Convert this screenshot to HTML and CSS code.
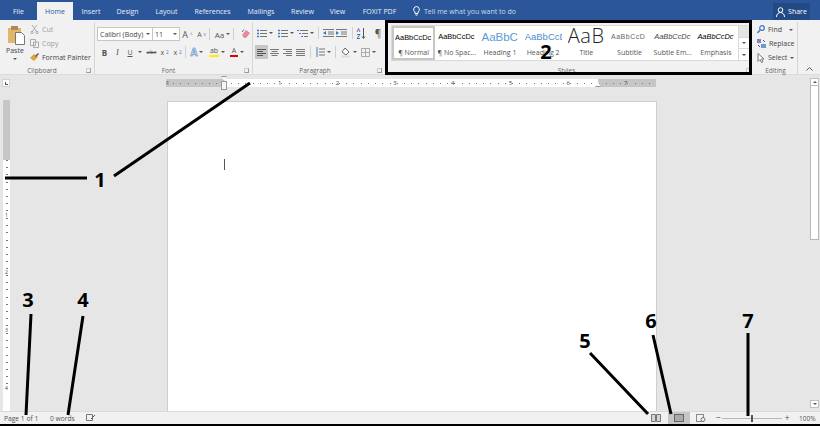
FILE: index.html
```html
<!DOCTYPE html>
<html lang="en">
<head>
<meta charset="utf-8">
<title>Word</title>
<link rel="stylesheet" href="styles.css">
</head>
<body>
<div class="app">
  <header class="tabs">
    <span class="tab w-file">File</span>
    <span class="tab tab-on w-home">Home</span>
    <span class="tab w-insert">Insert</span>
    <span class="tab w-design">Design</span>
    <span class="tab w-layout">Layout</span>
    <span class="tab w-ref">References</span>
    <span class="tab w-mail">Mailings</span>
    <span class="tab w-review">Review</span>
    <span class="tab w-view">View</span>
    <span class="tab w-foxit">FOXIT PDF</span>
    <span class="tell">
      <svg width="7" height="10" viewBox="0 0 7 10"><path d="M3.500.5a3 3 0 0 0-1.500 5.500v1.500h3V6a3 3 0 0 0-1.500-5.500zM2.500 9h2" fill="none" stroke="#fff"/></svg>
      Tell me what you want to do
    </span>
    <span class="share">
      <svg width="9" height="10" viewBox="0 0 9 10"><circle cx="4.500" cy="3" r="2.300" fill="none" stroke="#fff"/><path d="M.5 10c0-3 2-4.500 4-4.500s4 1.500 4 4.500" fill="none" stroke="#fff"/></svg>
      Share
    </span>
  </header>

  <section class="ribbon">
    <div class="group g-clip">
      <div class="body clip-body">
        <div class="paste">
          <svg width="18" height="20" viewBox="0 0 18 20"><rect x="1" y="3" width="13" height="15" fill="#e2b568"/><rect x="4" y="1" width="7" height="4" fill="#a98a5c"/><path d="M8.500 7.500h6l3 3v9h-9z" fill="#fff" stroke="#777"/></svg>
          <span>Paste</span>
          <i class="caret"></i>
        </div>
        <div class="clip-list">
          <span class="clip-item off"><svg width="9" height="9" viewBox="0 0 9 9"><path d="M2 0l5 7M7 0L2 7" stroke="#aaa" fill="none"/><circle cx="2" cy="7.500" r="1.200" fill="none" stroke="#aaa"/><circle cx="7" cy="7.500" r="1.200" fill="none" stroke="#aaa"/></svg>Cut</span>
          <span class="clip-item off"><svg width="9" height="9" viewBox="0 0 9 9"><path d="M.5.5h5v6h-5zM3.500 3h5v5.500h-5z" fill="#f1f1f1" stroke="#aaa"/></svg>Copy</span>
          <span class="clip-item"><svg width="9" height="9" viewBox="0 0 9 9"><path d="M0 5l4-4 4 3-4 4z" fill="#d9a441"/><path d="M5 3l3-3 1 1-3 3z" fill="#555"/></svg>Format Painter</span>
        </div>
      </div>
      <div class="glabel">Clipboard<i class="launch"></i></div>
    </div>

    <div class="group g-font">
      <div class="body rows">
        <div class="row r-font1">
          <span class="combo c-name">Calibri (Body)<i class="caret"></i></span>
          <span class="combo c-size">11<i class="caret"></i></span>
          <span class="ib w-a">A<sup class="up">^</sup></span>
          <span class="ib w-a small-a">A<sup class="up">v</sup></span>
          <i class="sep"></i>
          <span class="ib w-aa">Aa<i class="caret"></i></span>
          <i class="sep"></i>
          <span class="ib w-er"><svg width="10" height="10" viewBox="0 0 10 10"><path d="M1 6l4-5 4 3-4 5H3z" fill="#e58a9a"/><path d="M3 .5L1 3" stroke="#3b78c4"/></svg></span>
        </div>
        <div class="row r-font2">
          <span class="ib w-fmt b">B</span>
          <span class="ib w-fmt it">I</span>
          <span class="ib w-u u"><span class="u-text">U</span><i class="caret"></i></span>
          <span class="ib w-fmt tiny"><s>abc</s></span>
          <span class="ib w-fmt">x<sub>2</sub></span>
          <span class="ib w-fmt">x<sup>2</sup></span>
          <i class="sep"></i>
          <span class="ib w-col blue-a"><span class="outline">A</span><i class="caret"></i></span>
          <span class="ib w-col"><span class="swatch sw-y">ab</span><i class="caret"></i></span>
          <span class="ib w-col"><span class="swatch sw-r">A</span><i class="caret"></i></span>
        </div>
      </div>
      <div class="glabel">Font<i class="launch"></i></div>
    </div>

    <div class="group g-para">
      <div class="body rows">
        <div class="row r-para1">
          <span class="ib w-list"><svg width="10" height="9" viewBox="0 0 10 9"><path d="M3 1.500h7M3 4.500h7M3 7.500h7" stroke="#777"/><path d="M0 1.500h2M0 4.500h2M0 7.500h2" stroke="#3b78c4" stroke-width="1.500"/></svg><i class="caret"></i></span>
          <span class="ib w-list"><svg width="10" height="9" viewBox="0 0 10 9"><path d="M3 1.500h7M3 4.500h7M3 7.500h7" stroke="#777"/><path d="M0 1.500h2M0 4.500h2M0 7.500h2" stroke="#3b78c4" stroke-width="1.500"/></svg><i class="caret"></i></span>
          <span class="ib w-multi"><svg width="11" height="9" viewBox="0 0 11 9"><path d="M3 1.500h8M5 4.500h6M7 7.500h4" stroke="#777"/><path d="M0 1.500h2M2 4.500h2M4 7.500h2" stroke="#3b78c4"/></svg><i class="caret"></i></span>
          <i class="sep sep-p"></i>
          <span class="ib w-ind"><svg width="11" height="8" viewBox="0 0 11 8"><path d="M0 .5h11M5 3h6M5 5h6M0 7.500h11" stroke="#777"/><path d="M0 4l3-2v4z" fill="#3b78c4"/></svg></span>
          <span class="ib w-ind"><svg width="11" height="8" viewBox="0 0 11 8"><path d="M0 .5h11M5 3h6M5 5h6M0 7.500h11" stroke="#777"/><path d="M3 4L0 2v4z" fill="#3b78c4"/></svg></span>
          <i class="sep sep-q"></i>
          <span class="ib w-sort"><svg width="10" height="11" viewBox="0 0 10 11"><path d="M1 4l1.500-3.500L4 4" fill="none" stroke="#8a5bb5"/><path d="M1 6.500h3l-3 4h3" fill="none" stroke="#3b78c4"/><path d="M7.500 0v10M6 8.500l1.500 2 1.500-2" fill="none" stroke="#555"/></svg></span>
          <span class="ib w-pil">¶</span>
        </div>
        <div class="row r-para2">
          <span class="ib w-al al-on"><svg width="9" height="7" viewBox="0 0 9 7"><path d="M0 .5h9M0 2.500h6M0 4.500h9M0 6.500h6" stroke="#555"/></svg></span>
          <span class="ib w-al"><svg width="9" height="7" viewBox="0 0 9 7"><path d="M0 .5h9M1.500 2.500h6M0 4.500h9M1.500 6.500h6" stroke="#777"/></svg></span>
          <span class="ib w-al"><svg width="9" height="7" viewBox="0 0 9 7"><path d="M0 .5h9M3 2.500h6M0 4.500h9M3 6.500h6" stroke="#777"/></svg></span>
          <span class="ib w-al"><svg width="9" height="7" viewBox="0 0 9 7"><path d="M0 .5h9M0 2.500h9M0 4.500h9M0 6.500h9" stroke="#777"/></svg></span>
          <i class="sep sep-a"></i>
          <span class="ib w-sp"><svg width="9" height="10" viewBox="0 0 9 10"><path d="M3 2h6M3 5h6M3 8h6" stroke="#777"/><path d="M1 0v10" stroke="#3b78c4"/></svg><i class="caret"></i></span>
          <i class="sep sep-p"></i>
          <span class="ib w-shade"><svg width="11" height="11" viewBox="0 0 11 11"><path d="M5 1l4 4-3 3-4-3z" fill="#fff" stroke="#666"/><path d="M1 9.500h9" stroke="#ddd" stroke-width="2"/></svg><i class="caret"></i></span>
          <span class="ib w-border"><svg width="9" height="9" viewBox="0 0 9 9"><path d="M.5.5h8v8h-8zM4.500.5v8M.5 4.500h8" fill="none" stroke="#aaa"/></svg><i class="caret"></i></span>
        </div>
      </div>
      <div class="glabel">Paragraph<i class="launch"></i></div>
    </div>

    <div class="group g-styles">
      <div class="gallery">
        <div class="cells">
          <div class="cell cell-on"><span class="pv pv-n">AaBbCcDc</span><span class="nm">¶ Normal</span></div>
          <div class="cell"><span class="pv pv-n">AaBbCcDc</span><span class="nm">¶ No Spac...</span></div>
          <div class="cell"><span class="pv pv-h1">AaBbCc</span><span class="nm">Heading 1</span></div>
          <div class="cell"><span class="pv pv-h2">AaBbCcD</span><span class="nm">Heading 2</span></div>
          <div class="cell"><span class="pv pv-t">AaB</span><span class="nm">Title</span></div>
          <div class="cell"><span class="pv pv-s">AaBbCcD</span><span class="nm">Subtitle</span></div>
          <div class="cell"><span class="pv pv-e">AaBbCcDc</span><span class="nm">Subtle Em...</span></div>
          <div class="cell"><span class="pv pv-em">AaBbCcDc</span><span class="nm">Emphasis</span></div>
        </div>
        <div class="gscroll">
          <span class="gbtn gb-off"></span>
          <span class="gbtn"><i class="caret"></i></span>
          <span class="gbtn gb-more"><i class="caret"></i></span>
        </div>
      </div>
      <div class="glabel">Styles<i class="launch"></i></div>
    </div>

    <div class="group g-edit">
      <div class="body edit-list">
        <span class="clip-item"><svg width="8" height="9" viewBox="0 0 8 9"><circle cx="5" cy="3" r="2.300" fill="none" stroke="#3b78c4" stroke-width="1.200"/><path d="M3 5L.5 8" stroke="#3b78c4" stroke-width="1.400"/></svg>Find<i class="caret caret-f"></i></span>
        <span class="clip-item"><svg width="9" height="9" viewBox="0 0 9 9"><rect x="0" y="0" width="4" height="4" fill="#8a7cc2"/><rect x="4" y="5" width="5" height="4" fill="#6d9bd1"/><path d="M6 1l2 2M1 6l2 2" stroke="#555"/></svg>Replace</span>
        <span class="clip-item"><svg width="8" height="10" viewBox="0 0 8 10"><path d="M1 .5v8l2-2 1.500 3 1.500-.7L4.500 6H7z" fill="#fff" stroke="#777"/></svg>Select<i class="caret caret-s"></i></span>
      </div>
      <div class="glabel">Editing</div>
    </div>
    <div class="collapse"><svg width="7" height="4" viewBox="0 0 7 4"><path d="M.5 3.500l3-3 3 3" fill="none" stroke="#555"/></svg></div>
  </section>

  <div class="ruler-row">
    <span class="corner"><i></i></span>
    <div class="hruler">
      <span class="hr-cell">1</span>
      <span class="hr-cell">1</span><span class="hr-cell">2</span><span class="hr-cell">3</span><span class="hr-cell">4</span><span class="hr-cell">5</span><span class="hr-cell">6</span><span class="hr-cell">7</span>
      <i class="indent-top"></i>
      <i class="indent-bot"></i>
      <i class="indent-right"></i>
    </div>
  </div>

  <main class="work">
    <div class="vruler">
      <span class="vr-cell">1</span><span class="vr-cell">2</span><span class="vr-cell">3</span><span class="vr-cell">4</span>
    </div>
    <div class="page"><i class="cursor"></i></div>
    <div class="vscroll">
      <span class="vs-btn"><b class="tri-up"></b></span>
      <span class="vs-thumb"></span>
      <span class="vs-btn vs-down"><b class="tri-down"></b></span>
    </div>
  </main>

  <footer class="status">
    <span class="st-page">Page 1 of 1</span>
    <span class="st-words">0 words</span>
    <svg class="st-proof" width="10" height="8" viewBox="0 0 10 8"><path d="M.5.5h6v6h-6z" fill="none" stroke="#777"/><path d="M5 5l4-4" stroke="#555"/></svg>
    <span class="st-space"></span>
    <span class="vw"><svg width="10" height="8" viewBox="0 0 10 8"><path d="M.5.5h4v7h-4zM5.500.5h4v7h-4z" fill="#d5d5d5" stroke="#777"/></svg></span>
    <span class="vw vw-on"><svg width="10" height="8" viewBox="0 0 10 8"><rect x=".5" y=".5" width="9" height="7" fill="#aaa" stroke="#666"/></svg></span>
    <span class="vw"><svg width="10" height="8" viewBox="0 0 10 8"><rect x=".5" y=".5" width="7" height="7" fill="none" stroke="#888"/><circle cx="7" cy="5.500" r="2" fill="#f1f1f1" stroke="#777"/></svg></span>
    <span class="zm zm-minus">−</span>
    <span class="slider"><i class="knob"></i></span>
    <span class="zm">+</span>
    <span class="pct">100%</span>
  </footer>
  <div class="bottom-line"></div>

  <svg class="marks" width="820" height="426" viewBox="0 0 820 426">
    <g stroke="#000" stroke-width="3" fill="none">
      <path d="M5 178H87M114 176L250 83"/>
      <rect x="386.500" y="21.500" width="364" height="52"/>
      <path d="M31 314L26 415M83 316L68 415M590 353L648 414M653 335L671 414M748 333V416"/>
    </g>
  </svg>
  <b class="num n1">1</b>
  <b class="num n2">2</b>
  <b class="num n3">3</b>
  <b class="num n4">4</b>
  <b class="num n5">5</b>
  <b class="num n6">6</b>
  <b class="num n7">7</b>
</div>
</body>
</html>
```
FILE: styles.css
```css
* { box-sizing: border-box; }
html, body { margin: 0; padding: 0; }
body { font-family: "Open Sans", "Liberation Sans", sans-serif; font-size: 7px; color: #444; background: #e6e6e6; overflow: hidden; }
i, b.tri-up, b.tri-down { display: block; font-style: normal; }
.app { position: relative; width: 820px; height: 426px; display: flex; flex-direction: column; overflow: hidden; }

/* tabs */
.tabs { height: 20px; flex: none; background: #2b579a; display: flex; align-items: stretch; color: #fff; }
.tab { display: flex; align-items: center; justify-content: center; padding-top: 2px; color: #e8eef7; }
.tab-on { background: #f1f1f1; color: #2b579a; margin-top: 2px; padding-top: 0; }
.w-file { width: 37px; } .w-home { width: 36px; } .w-insert { width: 36px; } .w-design { width: 37px; }
.w-layout { width: 41px; } .w-ref { width: 51px; } .w-mail { width: 46px; } .w-review { width: 37px; }
.w-view { width: 33px; } .w-foxit { width: 51px; }
.tell { margin-left: 8px; display: flex; align-items: center; gap: 4px; padding-top: 2px; color: #cfdbee; }
.share { margin-left: auto; margin-right: 10px; margin-top: 3px; width: 37px; display: flex; align-items: center; justify-content: center; gap: 3px; background: #234a85; }

/* ribbon */
.ribbon { height: 55px; flex: none; background: #f1f1f1; display: flex; position: relative; border-bottom: 1px solid #dcdcdc; }
.group { display: flex; flex-direction: column; border-right: 1px solid #d6d6d6; margin: 2px 0 0; }
.g-clip { width: 95px; } .g-font { width: 158px; } .g-para { width: 133px; } .g-styles { width: 368px; border-right: 0; } .g-edit { width: 44px; border-right: 1px solid #d6d6d6; }
.body { flex: 1; min-height: 0; }
.glabel { height: 9px; line-height: 10px; text-align: center; color: #666; font-size: 6.500px; position: relative; flex: none; margin-bottom: -1px; }
.g-clip .glabel, .g-font .glabel { padding-right: 10px; }
.g-para .glabel { padding-right: 8px; }
.launch { position: absolute; right: 3px; bottom: 2px; width: 5px; height: 5px; border: 1px solid #999; border-top-color: #ccc; border-left-color: #ccc; }
.caret { display: inline-block; flex: none; width: 0; height: 0; border-left: 2px solid transparent; border-right: 2px solid transparent; border-top: 2px solid #555; }

.clip-body { display: flex; }
.paste { width: 30px; padding: 3px 0 0 7px; display: flex; flex-direction: column; align-items: flex-start; font-size: 7px; color: #444; }
.paste span { margin-top: 1px; line-height: 9px; margin-left: -1px; }
.paste .caret { margin: 3px 0 0 6px; }
.clip-list { display: flex; flex-direction: column; padding-top: 3px; gap: 5px; }
.clip-item { display: flex; align-items: center; gap: 3px; height: 9px; white-space: nowrap; color: #444; }
.clip-item.off { color: #a0a0a0; }

.rows { display: flex; flex-direction: column; }
.row { display: flex; align-items: center; height: 14px; }
.r-font1 { margin: 5px 0 0 2px; }
.r-font2 { margin: 4px 0 0 2px; }
.r-para1 { margin: 4px 0 0 4px; }
.r-para2 { margin: 5px 0 0 2px; }
.combo { height: 14px; background: #fff; border: 1px solid #c6c6c6; display: flex; align-items: center; justify-content: space-between; padding: 0 2px; color: #444; flex: none; }
.c-name { width: 56px; } .c-size { width: 28px; margin-left: -1px; }
.ib { display: flex; align-items: center; justify-content: center; gap: 2px; height: 14px; flex: none; color: #555; }
.ib sup, .ib sub { font-size: 4.500px; line-height: 0; color: #3b78c4; }
.w-a { width: 13px; font-size: 9px; margin-left: 1px; } .small-a { font-size: 7px; }
.w-aa { width: 19px; font-size: 8px; margin-left: 2px; }
.w-er { width: 17px; margin-left: 2px; }
.sep { width: 1px; height: 12px; background: #d0d0d0; margin: 0 1px; flex: none; }
.r-font2 .w-fmt { width: 13px; }
.b { font-weight: 700; font-size: 8px; } .r-font2 .b { margin-left: 1px; }
.it { font-style: italic; font-family: "Liberation Serif", serif; font-size: 8.500px; }
.u-text { text-decoration: underline; }
.r-font2 .w-u { width: 21px; gap: 5px; }
.tiny { font-size: 6px; }
.w-col { width: 20px; }
.blue-a { font-size: 10px; font-weight: 700; }
.outline { color: #cfe0f4; -webkit-text-stroke: .5px #3b78c4; }
.swatch { display: block; line-height: 8px; padding: 0 1px; font-size: 7px; }
.sw-y { border-bottom: 2px solid #ffee00; }
.sw-r { border-bottom: 2px solid #e00000; padding: 0 2px; }

.w-list { width: 16px; margin-right: 5px; } .w-list + .w-multi { margin-left: -2px; }
.w-multi { width: 17px; }
.sep-p { margin: 0 4px; }
.sep-q { margin: 0 3px; }
.sep-a { margin: 0 5px 0 3px; }
.w-ind { width: 11px; margin-right: 2px; }
.w-sort { width: 10px; }
.w-pil { width: 14px; font-size: 10px; margin-left: 5px; }
.r-para2 .w-al { width: 13px; }
.al-on { background: #c6c6c6; }
.w-sp { width: 15px; }
.w-shade { width: 17px; }
.w-border { width: 15px; margin-left: 4px; }

/* styles */
.g-styles { padding-left: 5px; }
.gallery { height: 36px; margin-top: 3px; width: 357px; display: flex; background: #fff; border: 1px solid #d9d9d9; flex: none; }
.g-styles .glabel { margin-top: auto; padding-right: 12px; }
.cells { display: grid; grid-template-columns: repeat(8, 43.200px); flex: none; }
.cell { display: flex; flex-direction: column; align-items: center; overflow: hidden; height: 34px; }
.cell-on { border: 2px solid #c6c6c6; }
.pv { height: 22px; line-height: 22px; white-space: nowrap; overflow: hidden; width: 37px; text-align: left; font-family: "Liberation Sans", sans-serif; color: #111; flex: none; }
.cell-on .pv { height: 20px; line-height: 20px; }
.pv-n { font-size: 7.400px; color: #000; }
.pv-h1 { font-size: 11.500px; color: #5b9bd5; }
.pv-h2 { font-size: 9.500px; color: #4a8fd0; }
.pv-t { font-family: "Open Sans", sans-serif; font-weight: 300; font-size: 20px; letter-spacing: .5px; color: #222; line-height: 20px; }
.pv-s { font-size: 7px; color: #666; letter-spacing: .5px; }
.pv-e { font-size: 7.400px; font-style: italic; color: #444; }
.pv-em { font-size: 7.400px; font-style: italic; color: #000; }
.nm { line-height: 9px; height: 10px; white-space: nowrap; color: #555; }
.gscroll { width: 11px; flex: none; display: flex; flex-direction: column; margin-left: auto; border-left: 1px solid #d9d9d9; }
.gbtn { flex: 1; display: flex; align-items: center; justify-content: center; border-bottom: 1px solid #d9d9d9; background: #fff; }
.gb-off { background: #e4e4e4; }
.gb-more { border-bottom: 0; }
.gb-more .caret { border-top-color: #444; box-shadow: 0 -2px 0 -1px #444; }

.edit-list { display: flex; flex-direction: column; padding: 3px 0 0 3px; gap: 5px; }
.caret-f { margin-left: 4px; }
.caret-s { margin-left: 0; }
.collapse { flex: 1; display: flex; justify-content: center; align-items: flex-end; padding-bottom: 3px; }

/* rulers */
.ruler-row { height: 25px; flex: none; display: flex; padding-top: 3px; align-items: flex-start; }
.corner { width: 8px; height: 8px; margin: 1px 0 0 2px; background: #fff; border: 1px solid #d2d2d2; display: flex; align-items: center; justify-content: center; flex: none; }
.corner i { width: 3px; height: 3px; border-left: 1px solid #555; border-bottom: 1px solid #555; }
.hruler { position: relative; margin-left: 156px; width: 490px; height: 8px; margin-top: 1px; display: flex;
  background:
    repeating-linear-gradient(90deg, #777 0 1px, transparent 1px 7.210px) 0 3.500px / 100% 1px no-repeat,
    linear-gradient(90deg, #c6c6c6 58px, #fff 58px 432px, #c6c6c6 432px); font-size: 6px; line-height: 8px; color: #444; }
.hr-cell { width: 57.700px; text-align: right; flex: none; }
.hr-cell:first-child { text-align: left; width: 0; white-space: nowrap; }
.hr-cell:nth-child(2) { width: 115.400px; }
.indent-top { position: absolute; left: 55px; top: -3px; width: 6px; height: 5px; background: #f6f6f6; border: 1px solid #999; clip-path: polygon(0 0, 100% 0, 50% 100%); }
.indent-bot { position: absolute; left: 55px; top: 2px; width: 6px; height: 9px; background: #f6f6f6; border: 1px solid #999; }
.indent-right { position: absolute; left: 429px; top: 2px; width: 6px; height: 6px; background: #f6f6f6; border-bottom: 1px solid #999; clip-path: polygon(50% 0, 100% 100%, 0 100%); }

/* work area */
.work { flex: 1; min-height: 0; display: flex; background: #e6e6e6; }
.vruler { width: 7px; margin-left: 3px; flex: none; display: flex; flex-direction: column; background: linear-gradient(180deg, #c6c6c6 60px, #fff 60px); font-size: 5px; color: #444; padding-top: 60px; }
.vr-cell { height: 57.700px; flex: none; display: flex; align-items: flex-end; justify-content: center; line-height: 6px;
  background: repeating-linear-gradient(180deg, #777 0 1px, transparent 1px 7.210px) 50% 0 / 2px 100% no-repeat; }
.page { width: 490px; margin: 1px 0 0 157px; background: #fff; border-left: 1px solid #cfcfcf; border-top: 1px solid #cfcfcf; border-right: 1px solid #cfcfcf; position: relative; padding: 57px 0 0 56px; flex: none; }
.cursor { width: 1px; height: 11px; background: #555; }
.vscroll { width: 10px; margin-left: auto; margin-top: -22px; display: flex; flex-direction: column; flex: none; align-items: flex-start; }
.vs-btn { width: 9px; height: 8px; background: #fff; border: 1px solid #c0c0c0; display: flex; align-items: center; justify-content: center; flex: none; }
.vs-thumb { width: 9px; height: 155px; background: #fff; border: 1px solid #b8b8b8; margin-top: -1px; flex: none; }
.vs-down { margin-top: auto; margin-bottom: 3px; }
.tri-up { border-left: 2px solid transparent; border-right: 2px solid transparent; border-bottom: 2px solid #555; }
.tri-down { border-left: 2px solid transparent; border-right: 2px solid transparent; border-top: 2px solid #555; }

/* status */
.status { height: 13px; flex: none; background: #f1f1f1; border-top: 1px solid #dadada; display: flex; align-items: center; color: #555; font-size: 6.700px; }
.st-page { margin-left: 4px; width: 46px; }
.st-words { width: 36px; }
.st-space { flex: 1; }
.vw { width: 22px; height: 12px; display: flex; align-items: center; justify-content: center; flex: none; }
.vw-on { background: #c6c6c6; margin-left: 1px; }
.zm { width: 6px; text-align: center; font-size: 9px; line-height: 10px; flex: none; }
.zm-minus { margin-left: 3px; }
.slider { width: 60px; height: 1px; background: #b8b8b8; position: relative; margin: 0 2px 0 1px; flex: none; }
.knob { position: absolute; left: 29px; top: -3px; width: 2px; height: 7px; background: #555; }
.pct { width: 21px; margin-left: 9px; font-size: 6.500px; flex: none; }
.bottom-line { height: 2px; flex: none; background: #000; }

/* annotations */
.marks { position: absolute; left: 0; top: 0; pointer-events: none; }
.num { position: absolute; font-family: "Open Sans", sans-serif; font-size: 20px; line-height: 20px; font-weight: 700; color: #000; width: 16px; text-align: center; }
.n1 { left: 92px; top: 170px; }
.n2 { left: 538px; top: 42px; }
.n3 { left: 20px; top: 290px; }
.n4 { left: 75px; top: 290px; }
.n5 { left: 577px; top: 331px; }
.n6 { left: 643px; top: 311px; }
.n7 { left: 740px; top: 311px; }
```
